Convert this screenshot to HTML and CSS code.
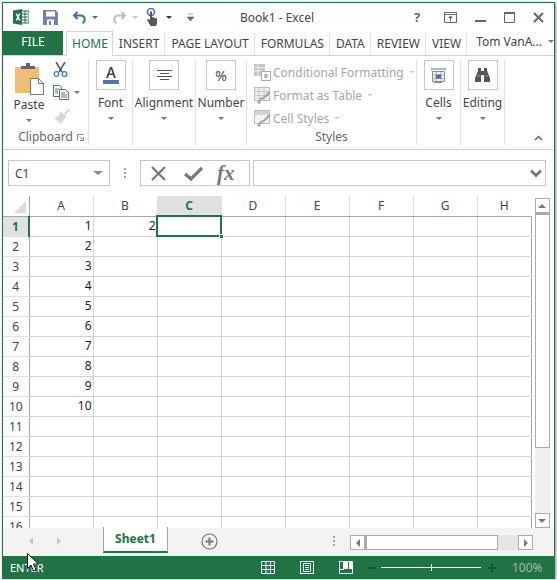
FILE: index.html
```html
<!DOCTYPE html>
<html lang="en">
  <head>
    <meta charset="UTF-8" />
    <title>Book1 - Excel</title>
    <link rel="stylesheet" href="styles.css">
  </head>
  <body>
    <div class="window">
      <!-- title bar -->
      <header class="titlebar">
        <div class="quick">
          <svg class="logo" width="16" height="16" viewBox="0 0 16 16">
            <rect x="7" y="2" width="9" height="12" fill="#fff" stroke="#217346"/>
            <path d="M9 5h6M9 8h6M9 11h6M12 2v12" stroke="#217346"/>
            <path d="M0 1.5 9 0v16L0 14.5z" fill="#217346"/>
            <path d="M2.5 4.5h1.7L5 6.5l.9-2h1.6L5.9 8l1.7 3.5H5.9L5 9.4l-.9 2.1H2.5L4.2 8z" fill="#fff"/>
          </svg>
          <svg class="save" width="15" height="15" viewBox="0 0 15 15">
            <path d="M0 0h12.5L15 2.5V15H0z" fill="#7a7fa8"/>
            <rect x="3" y="1.5" width="9" height="5" fill="#fff"/>
            <rect x="4" y="9.5" width="7" height="5.5" fill="#fff"/>
            <rect x="6" y="11" width="2" height="4" fill="#7a7fa8"/>
          </svg>
          <svg class="undo" width="15" height="13" viewBox="0 0 15 13">
            <path d="M5.5 1 2 4.5 5.5 8M2 4.5h7.5a4 4 0 0 1 1 7.5" fill="none" stroke="#3f6fa8" stroke-width="2"/>
          </svg>
          <span class="caret dark undo-caret"></span>
          <svg class="redo" width="15" height="13" viewBox="0 0 15 13">
            <path d="M9.5 1 13 4.5 9.5 8M13 4.5H5.5a4 4 0 0 0-1 7.5" fill="none" stroke="#bdbdbd" stroke-width="2"/>
          </svg>
          <span class="caret redo-caret"></span>
          <svg class="touch" width="13" height="18" viewBox="0 0 13 18">
            <circle cx="5" cy="4" r="3.5" fill="none" stroke="#3f6fa8" stroke-width="1.5"/>
            <path d="M4 3.5h2V9l5 1.5V15l-1 3H4.5L1 11.5l.7-.8L4 12z" fill="#555"/>
          </svg>
          <span class="caret black touch-caret"></span>
          <svg class="custom" width="7" height="8" viewBox="0 0 7 8">
            <path d="M1 1h5M0 4h7l-3.500 4z" fill="#666" stroke="#666" stroke-width=".6"/>
          </svg>
        </div>
        <div class="doc-title">Book1 - Excel</div>
        <div class="winctl">
          <span class="help">?</span>
          <svg width="13" height="11" viewBox="0 0 13 11">
            <path d="M.5.5h12v10H.5zM.5 2.500h12" fill="none" stroke="#666"/>
            <path d="M6.500 3.500 4 6h2v3h1V6h2z" fill="#666"/>
          </svg>
          <svg class="ctl-min" width="11" height="11" viewBox="0 0 11 11"><path d="M0 9h11" stroke="#666" stroke-width="2"/></svg>
          <svg class="ctl-max" width="11" height="11" viewBox="0 0 11 11"><path d="M.5 1.500h10v9H.5z" fill="none" stroke="#666"/><path d="M0 1h11" stroke="#666" stroke-width="2"/></svg>
          <svg class="ctl-close" width="11" height="11" viewBox="0 0 11 11"><path d="M1 1l9 9M10 1l-9 9" stroke="#666" stroke-width="2"/></svg>
        </div>
      </header>

      <!-- ribbon tabs -->
      <nav class="tabs">
        <div class="tab-file">FILE</div>
        <div class="tab tab-home">HOME</div>
        <div class="tab">INSERT</div>
        <div class="tab">PAGE LAYOUT</div>
        <div class="tab">FORMULAS</div>
        <div class="tab">DATA</div>
        <div class="tab">REVIEW</div>
        <div class="tab">VIEW</div>
        <div class="account">Tom VanA... <span class="caret"></span></div>
      </nav>

      <!-- ribbon -->
      <section class="ribbon">
        <div class="group group-clip">
          <div class="clip-body">
            <div class="paste">
              <svg width="29" height="32" viewBox="0 0 29 32">
                <rect x="0" y="4" width="24" height="26" rx="1" fill="#edbe74"/>
                <path d="M6 6V3h5V0h4v3h5v3z" fill="#666"/>
                <path d="M15.500 15.500h8l5 5v11h-13z" fill="#fff" stroke="#777"/>
                <path d="M23.500 15.500v5h5" fill="none" stroke="#777"/>
              </svg>
              <span class="big-label">Paste</span>
              <span class="caret"></span>
            </div>
            <div class="clip-tools">
              <svg width="15" height="15" viewBox="0 0 15 15">
                <path d="M3 0l6 10M12 0 6 10" stroke="#555" stroke-width="1.500"/>
                <circle cx="3.500" cy="12" r="2.300" fill="none" stroke="#3f7fc0" stroke-width="1.300"/>
                <circle cx="11.500" cy="12" r="2.300" fill="none" stroke="#3f7fc0" stroke-width="1.300"/>
              </svg>
              <div class="copy">
                <svg width="16" height="15" viewBox="0 0 16 15">
                  <path d="M.5.500h6l2 2v9H.5z" fill="#fff" stroke="#666"/>
                  <path d="M6.500 4.500h6l3 3v7h-9z" fill="#fff" stroke="#666"/>
                  <path d="M2 4h4M2 6h3M2 8h3M8 8h4M8 10h6M8 12h6" stroke="#4a76a8"/>
                </svg>
                <span class="caret"></span>
              </div>
              <svg width="17" height="16" viewBox="0 0 17 16">
                <path d="M11 6 16 1l1 1-5 5z" fill="#c9c9c9"/>
                <path d="M7 3l7 6-3 2-1 2-2 3-7-6 3-1 2-2z" fill="#d8d8d8"/>
              </svg>
            </div>
          </div>
          <div class="group-name">Clipboard
            <svg class="launcher" width="7" height="7" viewBox="0 0 7 7">
              <path d="M.5 6.500v-6h6M6.500 3v3.500H3M2.500 2.500l3 3" fill="none" stroke="#888"/>
            </svg>
          </div>
        </div>

        <div class="group group-font">
          <div class="drop">
            <div class="drop-box">
              <svg width="16" height="19" viewBox="0 0 16 19">
                <path d="M3 12 7 1h2l4 11h-2l-1-3H6l-1 3zM6.500 7.500h3L8 3z" fill="#444"/>
                <rect y="14" width="16" height="4" fill="#5b72a6"/>
              </svg>
            </div>
            <span class="big-label">Font</span>
            <span class="caret"></span>
          </div>
        </div>
        <div class="group group-align">
          <div class="drop">
            <div class="drop-box">
              <svg width="15" height="11" viewBox="0 0 15 11">
                <path d="M0 .5h15M3 3.500h9M0 6.500h15M3 9.500h9" stroke="#555"/>
              </svg>
            </div>
            <span class="big-label">Alignment</span>
            <span class="caret"></span>
          </div>
        </div>
        <div class="group group-number">
          <div class="drop">
            <div class="drop-box"><span class="percent">%</span></div>
            <span class="big-label">Number</span>
            <span class="caret"></span>
          </div>
        </div>

        <div class="group group-styles">
          <div class="style-rows">
            <div class="style-row">
              <svg width="17" height="17" viewBox="0 0 17 17">
                <path d="M0 0h11v12H0z" fill="#c4c4c4"/>
                <path d="M0 3.500h11M0 7h11M4 0v12" stroke="#eee"/>
                <rect x="7.500" y="7.500" width="9" height="9" fill="#fff" stroke="#aaa"/>
                <path d="M10 11h4M10 13h4M13 10l-2 4" stroke="#999"/>
              </svg>
              <span>Conditional Formatting</span><span class="caret small"></span>
            </div>
            <div class="style-row">
              <svg width="17" height="17" viewBox="0 0 17 17">
                <path d="M.5.500h15v13H.5z" fill="#eee" stroke="#bbb"/>
                <path d="M0 4.500h16M0 8.500h16M5 0v14M10 0v14" stroke="#c8c8c8"/>
                <path d="M15 4l2 2-7 6-3 1-1 4-3-1 3-5 3-1z" fill="#a8a8a8"/>
              </svg>
              <span>Format as Table</span><span class="caret small"></span>
            </div>
            <div class="style-row">
              <svg width="17" height="17" viewBox="0 0 17 17">
                <path d="M.5.500h15v13H.5z" fill="#f4f4f4" stroke="#bbb"/>
                <path d="M1 1h14v4H1z" fill="#d4d4d4"/>
                <path d="M15 4l2 2-7 6-3 1-1 4-3-1 3-5 3-1z" fill="#a8a8a8"/>
              </svg>
              <span>Cell Styles</span><span class="caret small"></span>
            </div>
          </div>
          <div class="group-name">Styles</div>
        </div>

        <div class="group group-cells">
          <div class="drop">
            <div class="drop-box">
              <svg width="15" height="17" viewBox="0 0 15 17">
                <path d="M0 .5v3M15 .5v3M1 2h13" stroke="#4a76a8"/>
                <path d="M1.500 4.500h12v10h-12z" fill="#f4f4f4" stroke="#888"/>
                <path d="M1 8h13M1 11.500h13M5 5v10M10 5v10" stroke="#aaa"/>
                <rect x="5" y="7.500" width="5" height="4" fill="#4a6fb0"/>
                <path d="M3 15.500h8" stroke="#888"/>
              </svg>
            </div>
            <span class="big-label">Cells</span>
            <span class="caret"></span>
          </div>
        </div>
        <div class="group group-editing">
          <div class="drop">
            <div class="drop-box">
              <svg width="15" height="14" viewBox="0 0 15 14">
                <path d="M3 0h3v3h3V0h3v3l3 7v4H9V7H6v7H0v-4l3-7z" fill="#555"/>
                <path d="M2 8h3M10 8h3" stroke="#999"/>
              </svg>
            </div>
            <span class="big-label">Editing</span>
            <span class="caret"></span>
          </div>
          <svg class="collapse" width="9" height="6" viewBox="0 0 9 6">
            <path d="M1 5l3.500-3.500L8 5" fill="none" stroke="#666" stroke-width="1.500"/>
          </svg>
        </div>
      </section>

      <!-- formula bar -->
      <div class="formula-bar">
        <div class="name-box"><span>C1</span><span class="caret grey"></span></div>
        <div class="bar-dots"><i></i><i></i><i></i></div>
        <div class="fx-box">
          <svg width="15" height="15" viewBox="0 0 15 15"><path d="M1 1l13 13M14 1 1 14" stroke="#777" stroke-width="2.200"/></svg>
          <svg width="19" height="15" viewBox="0 0 19 15"><path d="M1 8l6 5L18 2" fill="none" stroke="#777" stroke-width="3.200"/></svg>
          <span class="fx">fx</span>
        </div>
        <div class="input-box">
          <svg width="12" height="9" viewBox="0 0 12 9"><path d="M1 1.500l5 5 5-5" fill="none" stroke="#777" stroke-width="3"/></svg>
        </div>
      </div>

      <!-- sheet -->
      <div class="sheet-area">
        <table class="sheet">
          <thead>
            <tr>
              <th class="corner"><span class="corner-mark"></span></th>
              <th>A</th><th>B</th><th class="on">C</th><th>D</th><th>E</th><th>F</th><th>G</th><th class="col-h">H</th>
            </tr>
          </thead>
          <tbody>
            <tr><th class="on">1</th><td>1</td><td>2</td><td class="active"><span class="handle"></span></td><td></td><td></td><td></td><td></td><td></td></tr>
            <tr><th>2</th><td>2</td><td></td><td></td><td></td><td></td><td></td><td></td><td></td></tr>
            <tr><th>3</th><td>3</td><td></td><td></td><td></td><td></td><td></td><td></td><td></td></tr>
            <tr><th>4</th><td>4</td><td></td><td></td><td></td><td></td><td></td><td></td><td></td></tr>
            <tr><th>5</th><td>5</td><td></td><td></td><td></td><td></td><td></td><td></td><td></td></tr>
            <tr><th>6</th><td>6</td><td></td><td></td><td></td><td></td><td></td><td></td><td></td></tr>
            <tr><th>7</th><td>7</td><td></td><td></td><td></td><td></td><td></td><td></td><td></td></tr>
            <tr><th>8</th><td>8</td><td></td><td></td><td></td><td></td><td></td><td></td><td></td></tr>
            <tr><th>9</th><td>9</td><td></td><td></td><td></td><td></td><td></td><td></td><td></td></tr>
            <tr><th>10</th><td>10</td><td></td><td></td><td></td><td></td><td></td><td></td><td></td></tr>
            <tr><th>11</th><td></td><td></td><td></td><td></td><td></td><td></td><td></td><td></td></tr>
            <tr><th>12</th><td></td><td></td><td></td><td></td><td></td><td></td><td></td><td></td></tr>
            <tr><th>13</th><td></td><td></td><td></td><td></td><td></td><td></td><td></td><td></td></tr>
            <tr><th>14</th><td></td><td></td><td></td><td></td><td></td><td></td><td></td><td></td></tr>
            <tr><th>15</th><td></td><td></td><td></td><td></td><td></td><td></td><td></td><td></td></tr>
            <tr><th>16</th><td></td><td></td><td></td><td></td><td></td><td></td><td></td><td></td></tr>
          </tbody>
        </table>
        <div class="vscroll">
          <div class="sb-btn"><span class="tri tri-up"></span></div>
          <div class="v-thumb"></div>
          <div class="v-track"></div>
          <div class="sb-btn"><span class="tri tri-down"></span></div>
        </div>
      </div>

      <!-- sheet tabs -->
      <div class="sheet-tabs">
        <div class="tab-nav"><span class="tri tri-left pale"></span><span class="tri tri-right pale"></span></div>
        <div class="sheet-tab">Sheet1</div>
        <svg class="add-sheet" width="17" height="17" viewBox="0 0 17 17">
          <circle cx="8.500" cy="8.500" r="7.500" fill="none" stroke="#777" stroke-width="1.200"/>
          <path d="M8.500 4.500v8M4.500 8.500h8" stroke="#777" stroke-width="2"/>
        </svg>
        <div class="bar-dots tabs-dots"><i></i><i></i><i></i></div>
        <div class="hscroll">
          <div class="sb-btn"><span class="tri tri-left"></span></div>
          <div class="h-thumb"></div>
          <div class="h-track"></div>
          <div class="sb-btn"><span class="tri tri-right"></span></div>
        </div>
      </div>

      <!-- status bar -->
      <footer class="status">
        <span class="mode">ENTER</span>
        <svg class="view-normal" width="14" height="13" viewBox="0 0 14 13">
          <path d="M.5.500h13v12H.5zM.5 4.500h13M.5 8.500h13M5 .5v12M9.500.5v12" fill="none" stroke="#fff"/>
        </svg>
        <svg class="view-layout" width="14" height="13" viewBox="0 0 14 13">
          <path d="M.5.500h13v12H.5z" fill="none" stroke="#fff"/>
          <path d="M3.500 2.500h7v8h-7zM5 4.500h4M5 6.500h4M5 8.500h4" fill="none" stroke="#fff"/>
        </svg>
        <svg class="view-break" width="14" height="13" viewBox="0 0 14 13">
          <path d="M.5.500h13v12H.5z" fill="none" stroke="#fff"/>
          <path d="M1 8h3V1h1v8H1zM5 1h4v7H5zM10 1h3v7h-3z" fill="#fff"/>
        </svg>
        <span class="zoom-minus"></span>
        <div class="zoom-slider"><i></i></div>
        <span class="zoom-plus"></span>
        <span class="zoom-pct">100%</span>
      </footer>
    </div>

    <!-- mouse pointer over the status bar -->
    <svg class="pointer" width="13" height="20" viewBox="0 0 13 20">
      <path d="M.5.500v15l3.500-3.500 2.500 6 2.500-1-2.500-6h5z" fill="#fff" stroke="#111"/>
    </svg>
  </body>
</html>
```

FILE: styles.css
```css
/* page */
* {
  box-sizing: border-box;
}

html,
body {
  margin: 0;
  height: 100%;
}

body {
  position: relative;
  background: #fff;
  font-family: "Noto Sans", "Open Sans", Arial, sans-serif;
  font-size: 12px;
  color: #444;
  overflow: hidden;
}

svg {
  display: block;
  flex: none;
}

.window {
  display: flex;
  flex-direction: column;
  width: 553px;
  height: 576px;
  margin: 2px 0 0 2px;
  border: 1px solid #217346;
  border-width: 1px 1px 0 1px;
  background: #fff;
  box-shadow: 1px 1px 3px rgba(0, 0, 0, 0.45);
}

/* carets */
.caret {
  display: inline-block;
  width: 0;
  height: 0;
  border-style: solid;
  border-width: 3px 3.5px 0 3.5px;
  border-color: #777 transparent transparent transparent;
}

.caret.small {
  border-color: #c6c6c6 transparent transparent transparent;
  margin-left: 3px;
  border-width: 2.5px 3px 0 3px;
}

.caret.dark {
  border-top-color: #666;
}

.caret.black {
  border-top-color: #333;
}

.caret.grey {
  border-width: 4px 5px 0 5px;
  border-top-color: #8a8a8a;
}

/* title bar */
.titlebar {
  display: flex;
  align-items: center;
  height: 28px;
  flex: none;
}

.quick {
  display: flex;
  align-items: center;
  width: 237px;
  padding-left: 10px;
}

.save {
  margin-left: 14px;
}

.undo {
  margin-left: 14px;
}

.undo-caret {
  margin-left: 5px;
}

.redo {
  margin-left: 14px;
}

.redo-caret {
  margin-left: 5px;
  border-top-color: #c4c4c4;
}

.touch {
  margin-left: 8px;
}

.touch-caret {
  margin-left: 7px;
}

.custom {
  margin-left: 15px;
}

.doc-title {
  width: 73px;
  font-size: 12px;
  white-space: nowrap;
  color: #444;
}

.winctl {
  display: flex;
  align-items: center;
  margin-left: 101px;
}

.help {
  width: 10px;
  font-weight: 700;
  font-size: 13px;
  color: #666;
  margin-right: 20px;
}

.ctl-min {
  margin-left: 18px;
}

.ctl-max {
  margin-left: 18px;
}

.ctl-close {
  margin-left: 18px;
}

/* ribbon tabs */
.tabs {
  display: flex;
  height: 25px;
  flex: none;
  border-bottom: 1px solid #d4d4d4;
}

.tab-file {
  width: 60px;
  height: 24px;
  background: #217346;
  color: #fff;
  text-align: center;
  line-height: 22px;
  margin-right: 3px;
  margin-bottom: -1px;
}

.tab {
  padding: 0 5px 0 6px;
  line-height: 22px;
  margin-top: 1px;
  white-space: nowrap;
  border-right: 1px solid #e1e1e1;
  height: 22px;
  margin-top: 2px;
}

.tab-home {
  height: 25px;
  margin-top: 0;
  padding-top: 1px;
  color: #217346;
  background: #fff;
  border: 1px solid #d4d4d4;
  border-bottom: 0;
  padding-left: 5px;
  padding-right: 4px;
  position: relative;
  z-index: 1;
}

.account {
  display: flex;
  align-items: center;
  gap: 6px;
  margin-left: 9px;
  height: 21px;
  white-space: nowrap;
}

/* ribbon */
.ribbon {
  display: flex;
  height: 94px;
  flex: none;
  padding: 4px 0 4px;
  border-bottom: 1px solid #d4d4d4;
}

.group {
  display: flex;
  flex-direction: column;
  position: relative;
  border-right: 1px solid #e1e1e1;
  flex: none;
}

.group-clip {
  width: 86px;
}

.group-font {
  width: 44px;
}

.group-align {
  width: 63px;
}

.group-number {
  width: 51px;
}

.group-styles {
  width: 170px;
}

.group-cells {
  width: 44px;
}

.group-editing {
  width: 44px;
  border-right: 1px solid #e1e1e1;
}

.clip-body {
  display: flex;
  flex: 1;
}

.paste {
  display: flex;
  flex-direction: column;
  align-items: center;
  width: 50px;
  padding-left: 2px;
  padding-top: 3px;
}

.paste .big-label {
  margin-top: 1px;
}

.clip-tools {
  display: flex;
  flex-direction: column;
  gap: 8px;
  padding-top: 2px;
  padding-left: 0;
}

.copy {
  display: flex;
  align-items: center;
  gap: 5px;
}

.group-name {
  display: flex;
  justify-content: center;
  height: 16px;
  line-height: 16px;
  color: #666;
  position: relative;
}

.launcher {
  position: absolute;
  right: 4px;
  top: 5px;
}

.drop {
  display: flex;
  flex-direction: column;
  align-items: center;
}

.drop-box {
  display: flex;
  align-items: center;
  justify-content: center;
  width: 30px;
  height: 30px;
  border: 1px solid #c6c6c6;
}

.drop .big-label {
  margin-top: 4px;
}

.big-label {
  line-height: 18px;
  white-space: nowrap;
}

.drop .caret,
.paste .caret {
  margin-top: 5px;
}

.percent {
  font-size: 14px;
  color: #444;
}

.collapse {
  position: absolute;
  right: -39px;
  bottom: 4px;
}

.style-rows {
  display: flex;
  flex-direction: column;
  flex: 1;
  gap: 5px;
  padding: 3px 0 0 7px;
}

.style-row {
  display: flex;
  align-items: center;
  height: 18px;
  gap: 2px;
  color: #a6a6a6;
  white-space: nowrap;
}

/* formula bar */
.formula-bar {
  display: flex;
  align-items: center;
  height: 46px;
  flex: none;
  padding: 0 0 0 5px;
  padding-top: 0;
}

.name-box {
  display: flex;
  align-items: center;
  justify-content: space-between;
  width: 102px;
  height: 26px;
  border: 1px solid #c6c6c6;
  padding: 0 6px;
  color: #444;
}

.bar-dots {
  display: flex;
  flex-direction: column;
  gap: 2px;
  width: 30px;
  align-items: center;
}

.bar-dots i {
  width: 2px;
  height: 2px;
  background: #a6a6a6;
}

.fx-box {
  display: flex;
  align-items: center;
  width: 110px;
  height: 26px;
  border: 1px solid #c6c6c6;
  padding-left: 10px;
  gap: 18px;
}

.fx {
  font-family: "Liberation Serif", serif;
  font-style: italic;
  font-size: 21px;
  font-weight: 700;
  color: #777;
  line-height: 24px;
  margin-left: -4px;
}

.input-box {
  display: flex;
  align-items: center;
  justify-content: flex-end;
  width: 293px;
  height: 26px;
  margin-left: 3px;
  border: 1px solid #c6c6c6;
  padding-right: 3px;
}

/* sheet */
.sheet-area {
  display: flex;
  height: 332px;
  flex: none;
  overflow: hidden;
}

.sheet {
  border-collapse: collapse;
  table-layout: fixed;
  width: 528px;
  height: 340px;
  flex: none;
}

.sheet th {
  font-weight: 400;
  color: #444;
  padding: 0;
  text-align: center;
}

.sheet thead th {
  height: 20px;
  width: 64px;
  border-right: 1px solid #e1e1e1;
  border-bottom: 1px solid #a6a6a6;
  position: relative;
}

.sheet thead th.corner {
  width: 26px;
  border-right: 1px solid #a6a6a6;
}

.sheet thead th.col-h {
  width: 54px;
  border-right: 0;
}

.sheet thead th.on {
  background: #e1e1e1;
  color: #217346;
  font-weight: 700;
  border-bottom: 2px solid #217346;
}

.corner-mark {
  position: absolute;
  right: 3px;
  bottom: 3px;
  width: 0;
  height: 0;
  border-style: solid;
  border-width: 0 0 12px 12px;
  border-color: transparent transparent #dcdcdc transparent;
}

.sheet tbody th {
  height: 20px;
  border-right: 1px solid #a6a6a6;
  border-bottom: 1px solid #e1e1e1;
}

.sheet tbody th.on {
  background: #e1e1e1;
  color: #217346;
  font-weight: 700;
  border-right: 2px solid #217346;
}

.sheet td {
  height: 20px;
  padding: 0 1px 0 0;
  text-align: right;
  color: #1c1c1c;
  border-right: 1px solid #d4d4d4;
  border-bottom: 1px solid #d4d4d4;
  line-height: 18px;
}

.sheet td:last-child {
  border-right: 1px solid #a6a6a6;
}

.sheet td.active {
  position: relative;
  outline: 2px solid #217346;
  outline-offset: -1px;
}

.handle {
  position: absolute;
  right: -3px;
  bottom: -3px;
  width: 5px;
  height: 5px;
  background: #217346;
  border: 1px solid #fff;
}

.vscroll {
  display: flex;
  flex-direction: column;
  width: 16px;
  margin: 2px 0 0 3px;
}

.sb-btn {
  display: flex;
  align-items: center;
  justify-content: center;
  flex: none;
  width: 15px;
  height: 15px;
  border: 1px solid #ababab;
  background: #fff;
}

.v-thumb {
  height: 235px;
  border: 1px solid #ababab;
  border-top-width: 2px;
  background: #fff;
  width: 15px;
}

.v-track {
  flex: 1;
  background: #f0f0f0;
  width: 15px;
}

.tri {
  display: block;
  width: 0;
  height: 0;
  border-style: solid;
  border-color: transparent;
}

.tri-up {
  border-width: 0 4px 4px 4px;
  border-bottom-color: #777;
}

.tri-down {
  border-width: 4px 4px 0 4px;
  border-top-color: #777;
}

.tri-left {
  border-width: 4px 4px 4px 0;
  border-right-color: #777;
}

.tri-right {
  border-width: 4px 0 4px 4px;
  border-left-color: #777;
}

.tri-left.pale {
  border-right-color: #c6c6c6;
}

.tri-right.pale {
  border-left-color: #c6c6c6;
}

/* sheet tabs */
.sheet-tabs {
  display: flex;
  align-items: flex-start;
  height: 28px;
  flex: none;
  background: #f3f3f1;
}

.tab-nav {
  display: flex;
  align-items: center;
  gap: 24px;
  width: 100px;
  height: 25px;
  padding-left: 26px;
}

.sheet-tab {
  width: 65px;
  height: 26px;
  line-height: 24px;
  text-align: center;
  background: #fff;
  font-weight: 700;
  color: #217346;
  border: 1px solid #a6a6a6;
  border-top: 0;
  border-bottom: 2px solid #217346;
  margin-top: -1px;
}

.add-sheet {
  margin: 5px 0 0 33px;
}

.tabs-dots {
  width: 30px;
  margin: 8px 0 0 101px;
}

.hscroll {
  display: flex;
  margin: 7px 0 0 1px;
  height: 15px;
}

.h-thumb {
  width: 133px;
  border: 1px solid #ababab;
  border-left-width: 2px;
  background: #fff;
}

.h-track {
  width: 20px;
  background: #e6e6e6;
}

/* status bar */
.status {
  position: relative;
  display: flex;
  align-items: center;
  height: 23px;
  flex: none;
  margin: 0 -1px;
  background: #217346;
  color: #fff;
  font-size: 11px;
}

.mode {
  width: 259px;
  padding-left: 8px;
}

.view-layout,
.view-break {
  margin-left: 25px;
}

.zoom-minus {
  width: 7px;
  height: 2px;
  margin-left: 16px;
  background: #14503a;
}

.zoom-slider {
  position: relative;
  width: 100px;
  height: 1px;
  margin-left: 5px;
  background: #fff;
}

.zoom-slider i {
  position: absolute;
  left: 50px;
  top: -3px;
  width: 1px;
  height: 7px;
  background: #fff;
}

.zoom-plus {
  position: relative;
  width: 8px;
  height: 2px;
  margin-left: 7px;
  background: #14503a;
}

.zoom-plus::after {
  content: "";
  position: absolute;
  left: 3px;
  top: -3px;
  width: 2px;
  height: 8px;
  background: #14503a;
}

.zoom-pct {
  margin-left: 16px;
  color: #9dbdab;
  font-size: 12px;
}

/* mouse pointer */
.pointer {
  position: absolute;
  left: 27px;
  top: 553px;
}
```
